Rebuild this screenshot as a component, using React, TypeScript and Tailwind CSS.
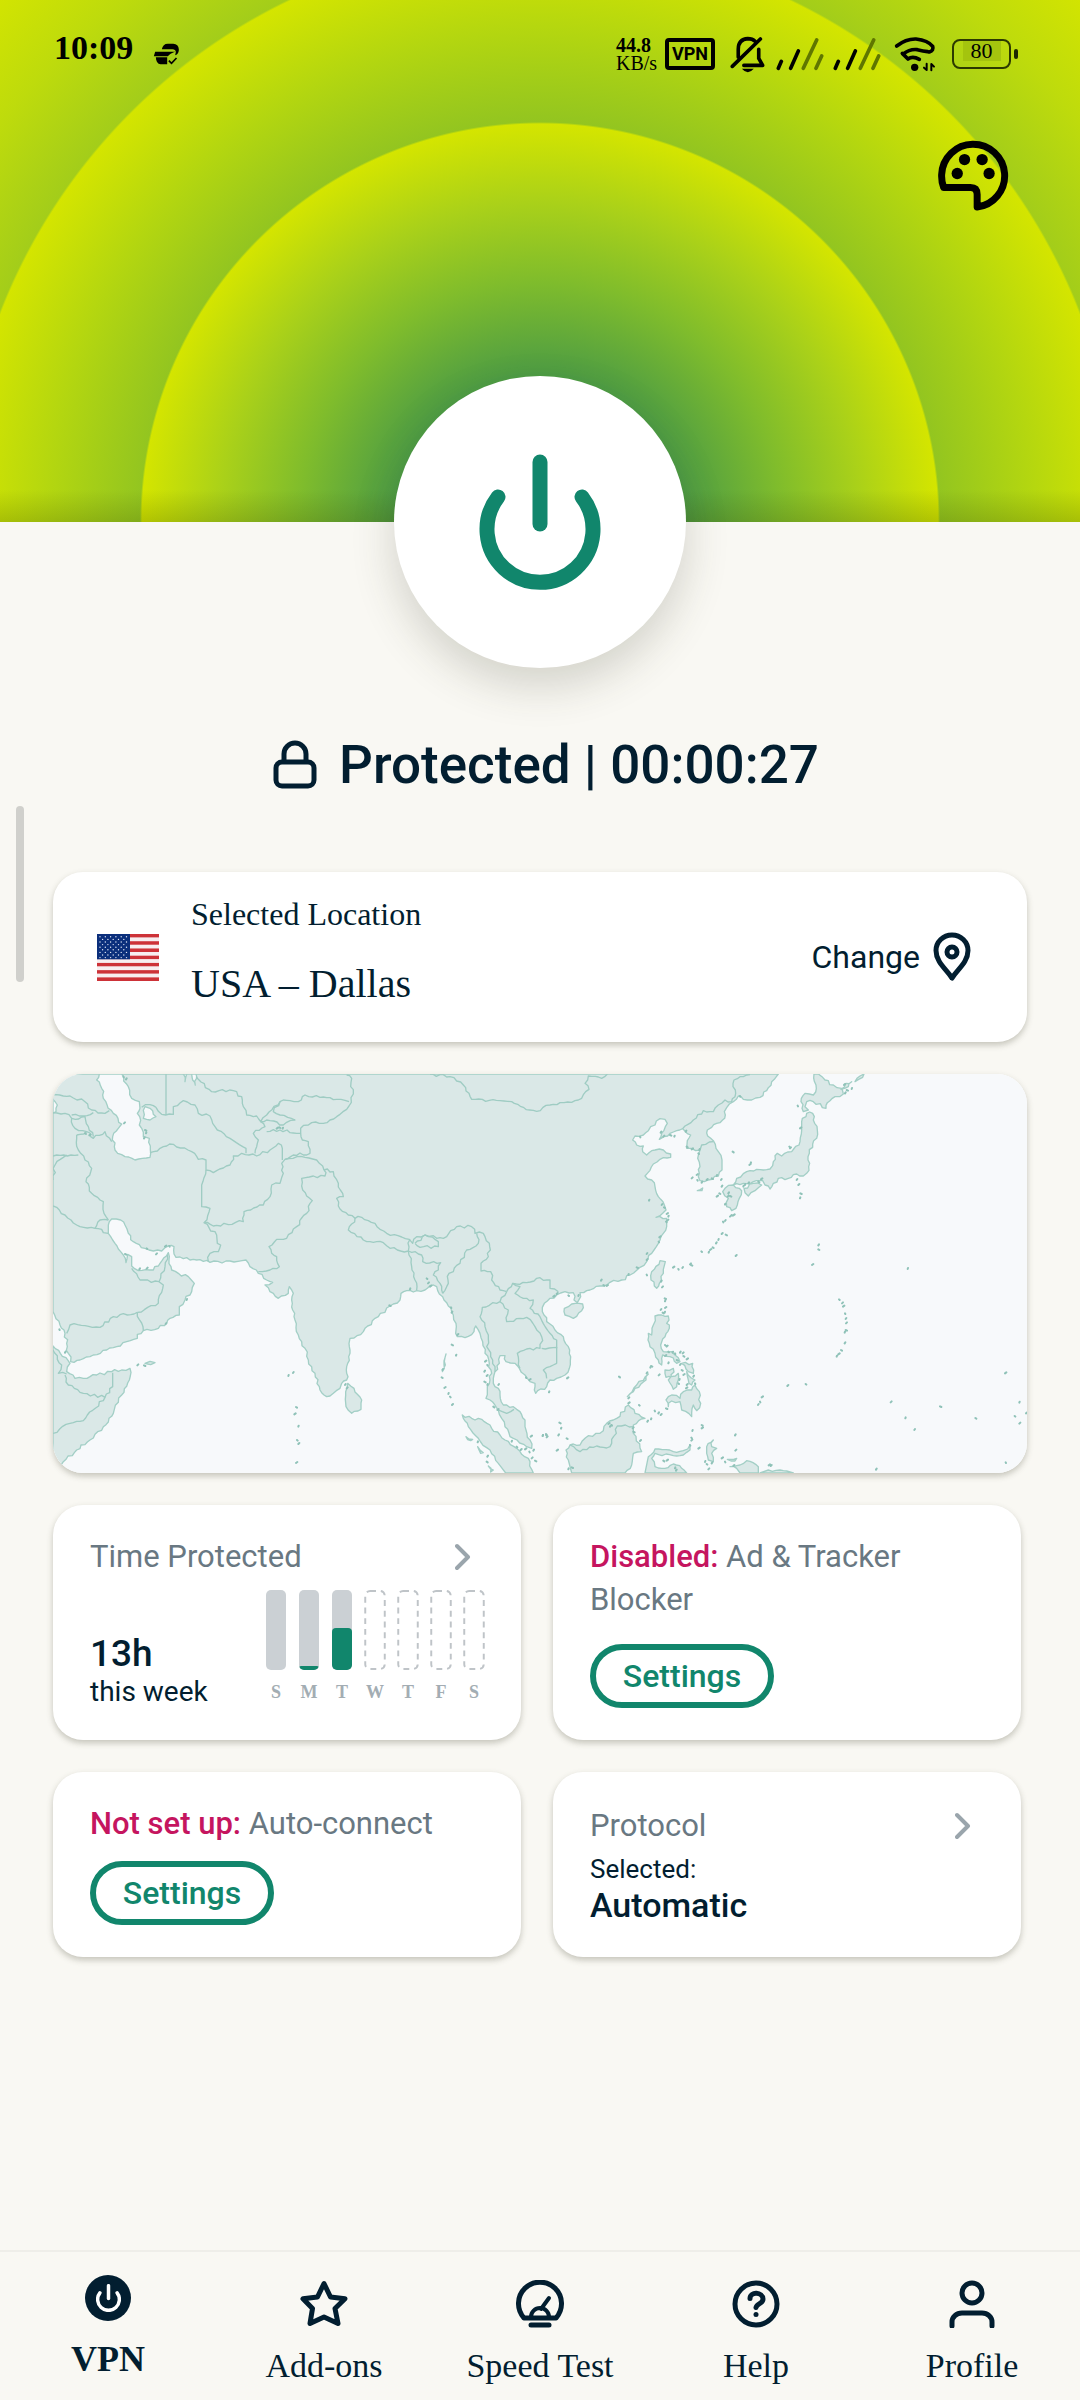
import type { ReactNode } from "react";

const SANS = "font-['Roboto',sans-serif]";
const SERIF = "font-['Liberation_Serif',serif]";

/* ---------- Map ---------- */

type Shape = [dx: number, points: string];

const LAND: Shape[] = [
  [0, "9,12 2185,12 2165,35 2150,62 2130,82 2105,90 2080,88 2065,78 2050,95 2038,102 2023,125 2024,145 2000,160 1985,172 1972,180 1973,198 1990,212 2005,245 2016,270 2016,300 2005,318 1975,330 1950,332 1945,320 1950,290 1943,265 1950,240 1925,235 1910,235 1912,212 1922,195 1905,183 1898,176 1880,182 1860,190 1842,200 1828,208 1835,190 1852,160 1845,148 1830,146 1815,165 1795,182 1780,195 1755,198 1748,210 1760,225 1780,228 1778,245 1790,255 1815,240 1840,240 1862,252 1862,262 1830,268 1810,282 1785,318 1805,330 1815,350 1825,380 1843,405 1848,420 1838,430 1818,442 1850,445 1850,470 1840,490 1825,520 1805,550 1790,575 1770,592 1740,615 1715,630 1680,637 1650,648 1620,660 1590,668 1592,680 1582,698 1572,690 1570,668 1545,665 1520,675 1500,685 1483,700 1477,725 1490,755 1515,780 1540,800 1555,830 1562,860 1558,895 1545,915 1520,925 1500,930 1490,950 1457,970 1455,940 1440,935 1425,915 1408,895 1395,880 1368,875 1365,857 1350,857 1348,880 1335,905 1330,925 1330,940 1345,955 1350,975 1360,1005 1390,1010 1410,1025 1425,1050 1428,1080 1440,1110 1445,1135 1430,1130 1380,1100 1365,1070 1355,1045 1345,1020 1320,990 1308,985 1312,950 1325,910 1318,880 1305,850 1298,815 1290,790 1277,768 1272,785 1245,803 1222,800 1218,760 1210,735 1195,708 1178,680 1160,650 1150,645 1125,660 1100,662 1070,662 1053,670 1050,690 1020,708 985,740 945,775 940,785 900,805 897,820 900,850 893,880 890,930 875,940 870,955 850,970 840,978 822,975 808,950 795,910 775,870 765,835 745,795 735,750 727,700 725,660 718,650 715,670 685,685 660,665 645,645 668,637 650,630 625,610 600,590 588,570 540,573 480,577 440,570 400,566 378,562 372,530 355,528 335,543 310,543 285,535 250,515 235,490 225,465 212,450 185,447 175,465 175,490 195,520 212,545 228,578 233,553 245,560 245,588 265,602 310,600 330,580 355,548 357,570 365,600 385,610 415,620 433,640 425,665 405,690 388,710 388,735 360,745 350,760 325,775 280,782 262,793 262,805 200,830 130,855 90,870 62,875 55,850 50,820 45,790 30,765 9,725"],
  [0, "9,828 60,880 50,905 75,925 100,925 140,915 185,905 215,900 240,895 238,930 215,975 190,1030 160,1070 120,1110 80,1140 40,1175 20,1200 9,1209"],
  [0, "893,940 912,955 935,990 933,1018 905,1030 888,1010 887,965"],
  [0, "1237,1035 1265,1045 1295,1048 1325,1075 1365,1110 1400,1135 1435,1165 1450,1209 1367,1209 1345,1180 1320,1140 1285,1105 1255,1070"],
  [1470, "73,715 95,702 128,702 125,722 100,745 75,735"],
  [1470, "360,572 376,575 370,610 358,640 350,655 333,630 335,605"],
  [1470, "800,130 818,130 820,150 832,180 830,205 818,222 808,250 806,290 800,310 790,318 770,312 745,325 715,325 700,340 690,357 675,345 668,332 640,335 610,340 580,345 590,325 620,305 650,298 690,297 700,275 712,250 725,258 755,245 780,215 785,180 785,155"],
  [1470, "612,355 640,340 665,345 645,362 625,378"],
  [1470, "555,355 580,345 605,362 598,385 588,415 575,422 560,410 565,385 548,365"],
  [1470, "822,12 835,12 855,30 880,45 905,55 910,72 885,80 862,98 858,115 820,95 800,95 795,110 805,120 790,125 783,95 795,70 820,75 828,45"],
  [1470, "903,58 918,40 935,35 925,50"],
  [1470, "945,35 960,18 972,12 968,22"],
  [1470, "345,738 385,738 380,760 388,775 375,800 362,825 370,845 395,845 405,855 420,875 410,880 390,860 368,855 365,885 355,870 345,850 330,830 325,790 335,795 340,765"],
  [1470, "375,900 400,895 395,925 378,922"],
  [1470, "385,930 415,910 410,950 400,958"],
  [1470, "425,880 458,880 460,910 445,905"],
  [1470, "440,905 465,930 455,945 445,930"],
  [1470, "378,990 395,975 420,985 430,965 455,960 465,945 478,965 482,1000 470,1022 460,1005 455,1040 425,1020 420,995 395,993 385,1010"],
  [1470, "262,980 290,945 325,912 318,930 280,965"],
  [1470, "265,1005 285,1030 315,1045 280,1065 280,1090 305,1145 280,1150 275,1185 255,1209 95,1209 85,1170 78,1140 90,1125 120,1125 135,1105 180,1090 200,1060 230,1045"],
  [1470, "325,1160 345,1137 400,1145 430,1142 450,1125 450,1140 430,1155 400,1157 345,1150 335,1165 345,1190 375,1195 400,1182 425,1195 440,1209 315,1209"],
  [1470, "500,1130 520,1110 515,1130 530,1135 515,1150 520,1175 505,1170 500,1150"],
  [1470, "570,1190 600,1185 620,1172 655,1190 655,1209 600,1209 590,1195"],
  [1470, "660,1209 685,1200 720,1200 760,1209"],
  [1470, "562,1168 590,1165 585,1173"],
  [1470, "472,362 488,354 486,362"],
  [0, "1177,905 1188,852 1186,885"],
  [0, "285,880 300,874 315,878 302,884"],
  [0, "1248,1100 1268,1108 1262,1112"],
  [0, "1283,1130 1300,1148 1292,1150"],
  [0, "1315,1188 1330,1200 1322,1206"],
];

const LAKES: Shape[] = [
  [0, "148,12 215,12 235,50 245,85 268,95 270,115 262,130 275,175 280,200 298,205 300,262 255,270 225,260 195,240 188,200 205,175 215,162 190,130 160,85 155,55 140,30"],
  [0, "285,110 300,115 318,140 300,150 280,145"],
  [0, "400,12 410,12 405,35"],
  [0, "425,12 438,12 436,45 428,30"],
  [0, "9,88 22,105 18,125 9,130"],
];

const BORDERS: string[] = [
  "1140,12 1200,20 1240,45 1265,88 1350,92 1385,95 1420,112 1460,124 1500,105 1530,98 1565,97 1595,85 1617,58 1605,40 1615,18 1655,25 1672,12",
  "890,15 905,25 902,50 910,72 897,108 860,140 820,160 785,158 752,175 752,190",
  "897,95 860,88 810,82 765,75 745,95 720,92 690,95 670,125 690,135 735,150 700,165 650,150 632,155",
  "650,185 690,180 740,190 752,190 757,210 775,215 780,250 730,255 705,268",
  "348,12 348,135",
  "318,112 335,133 370,133 370,110 400,92 435,105 445,130 480,138 495,170 540,205 588,235 588,250",
  "275,112 300,104 318,112",
  "438,20 485,65 550,62 575,80 580,110 590,135 620,138 632,155 650,135 690,95",
  "632,155 645,170 610,190 625,210 615,250",
  "300,248 340,230 370,223 425,245 445,268 468,270 468,300 490,308 540,285 550,258 575,250 620,258 660,240 685,220 697,235 697,270",
  "468,300 455,345 455,410 480,415 462,458 500,495 502,520 512,525 505,545 480,550 475,575",
  "462,458 500,466 580,455 582,425 640,405 660,380 665,345 690,340 700,310 695,280 705,268 765,262 800,270 822,300",
  "822,300 825,318 755,325 758,360 787,392 770,430 740,470 710,505 680,508 657,530 665,550 680,560 688,590 660,600 625,605",
  "822,300 850,305 865,340 880,380 860,385 865,408 895,435 915,445 935,442 975,460 1010,490 1078,508 1088,520 1100,500 1125,495 1160,505 1180,505 1220,470 1265,470 1275,490 1300,490 1318,520 1315,560 1293,580 1293,603 1322,605 1325,630 1350,660 1370,665",
  "915,445 895,480 950,515 1000,518 1020,535 1075,543 1080,508",
  "1095,520 1125,495 1165,515 1165,530 1110,532 1095,520",
  "1075,543 1115,555 1118,575 1172,578 1165,600 1150,615 1170,640 1178,670",
  "1075,543 1085,590 1095,630 1100,660",
  "1280,490 1285,520 1250,540 1230,580 1210,605 1197,610 1190,650 1178,670",
  "1370,665 1350,695 1297,712 1290,740 1305,770 1315,795 1310,830 1335,890 1335,905",
  "1370,665 1388,640 1410,650 1395,670 1420,685 1450,690 1440,715 1470,740 1500,790 1520,810 1520,835",
  "1350,695 1375,720 1370,755 1430,742 1455,770 1475,800 1470,835 1430,837 1402,850 1410,895",
  "1388,640 1430,638 1460,625 1500,630 1500,655 1525,665",
  "1475,835 1520,832 1520,880 1480,900 1490,925",
  "1898,176 1930,150 1960,122 1990,125 2025,90 2045,95 2055,80 2052,30 2070,20 2100,14",
  "1950,240 1955,225 1990,215",
  "9,408 90,470 135,475 150,450 175,450",
  "135,475 155,478 160,488 175,490",
  "80,195 85,240 105,270 125,295 108,335 125,370 160,395 162,430 175,450",
  "9,75 60,78 105,95 125,120 165,130 178,122",
  "9,128 45,130 65,145 75,175 110,185 130,205 165,185 185,215",
  "65,145 105,140 115,170 130,200",
  "65,135 100,138 130,128",
  "80,195 110,185",
  "9,258 85,255",
  "9,330 15,285 50,255",
  "262,727 325,700 340,645 327,635 270,630 245,595",
  "262,727 280,782",
  "327,635 345,590 352,555",
  "50,790 60,765 150,772 190,740 262,727",
  "9,840 35,885 25,910 50,912",
  "45,915 55,945 100,970 165,982 188,950 188,908",
  "165,982 100,1052 60,1060 9,1090",
  "1345,1020 1370,1030 1392,1018",
  "1560,1125 1590,1145 1630,1132 1680,1130 1702,1068 1750,1070",
];

const ISLETS: Shape[] = [
  [0, "28,778 45,848 262,886 282,886 715,918 729,909 738,1011 733,1033 745,1070 741,1110 745,1122 738,1179 220,20 228,28 222,160 285,180 288,190 282,205 688,172 680,176 698,176 290,535 318,553 345,530 358,528 268,598 290,596 225,552 410,690 347,762 105,190 118,196 1080,658 1130,625 1134,640 1140,650 1203,712 1205,728 1222,795 1205,824 1218,857 1177,900 1175,922 1183,954 1195,972 1200,980 1206,1005 1305,875 1312,885 1303,905 1310,918 1303,935 1312,945 1345,945 1330,1010 1342,1020 1385,1115 1400,1130 1412,1140 1425,1138 1438,1145 1450,1142 1445,1165 1455,1172 1283,1117 1312,1160 1310,1175 1442,1100 1478,1098 1488,1092 1490,1102 1438,930 1428,922 885,945 890,955 1018,706"],
  [1470, "300,200 362,188 370,200 390,195 403,200 437,185 440,230 455,238 478,240 475,250 455,325 470,315 472,330 485,338 500,330 515,325 530,318 543,330 578,245 628,285 632,280 748,230 750,235 780,175 773,107 770,330 775,345 781,370 780,385 545,350 538,370 530,380 555,404 575,435 570,440 580,436 549,455 555,453 545,492 557,494 535,510 528,520 518,532 510,540 506,548 484,544 587,558 399,593 415,597 427,594 450,583 453,585 327,392 365,405 372,412 380,432 385,440 378,455 382,452 358,502 356,515 320,552 320,570 290,592 265,615 183,632 190,645 200,648 115,678 85,676 50,672 40,680 320,614 363,635 366,652 374,685 375,694 362,720 368,728 375,714 374,728 375,825 380,830 375,858 405,850 420,848 428,850 410,870 385,880 420,885 425,900 430,915 418,930 415,940 440,945 438,955 465,940 460,920 356,916 333,888 331,893 320,910 237,920 81,925 27,967 297,1005 265,985 265,1000 344,1022 355,1030 362,1035 378,1015 333,1048 322,1055 485,1065 485,1075 457,1083 454,1103 454,1112 475,1136 450,1125 585,1096 586,1142 58,1058 63,1076 55,1096 80,1105 50,1142 8,1098 18,1095 300,1113 205,1062 215,1065 210,1070 278,1075 280,1085 405,1195 408,1202 370,1172 380,1172 495,1176 500,1182 505,1198 545,1165 555,1175 515,1180 580,1188 95,1192 85,1198 835,526 835,538 816,585 1103,597 897,688 906,700 909,710 915,730 917,747 918,760 917,780 914,788 914,820 903,840 895,853 890,860 797,942 742,948 665,982 660,995 654,1005 1052,997 1200,1009 1096,1045 1123,1080 1306,1044 1395,910 1438,998 1424,1038 1438,1061 1458,1030 1397,1177 1008,1199 912,45 920,60 935,57 915,70 430,858 440,868 398,848 385,845 692,1188 686,1186 600,78 565,370 563,380 570,378 615,345 625,340 655,335 663,328 610,350"],
];

function parse([dx, pts]: Shape) {
  return pts.split(" ").map((p) => {
    const [x, y] = p.split(",").map(Number);
    return [x + dx, y];
  });
}

/* Breaks long segments into short ones with a slight, repeatable wobble. */
function roughPath(shape: Shape, close: boolean) {
  const pts = parse(shape);
  if (close) pts.push(pts[0]);
  const out: string[] = [`M${pts[0][0]} ${pts[0][1]}`];
  for (let i = 1; i < pts.length; i++) {
    const [ax, ay] = pts[i - 1];
    const [bx, by] = pts[i];
    const len = Math.hypot(bx - ax, by - ay);
    const straight = ax === bx || (ay === 12 && by === 12) || ay === 1209;
    const n = straight ? 1 : Math.max(1, Math.round(len / 11));
    for (let k = 1; k <= n; k++) {
      const t = k / n;
      const seed = Math.sin((ax + k * 17) * 12.9 + (ay - k * 5) * 78.2) * 43758.5;
      const w = k === n ? 0 : (seed - Math.floor(seed) - 0.5) * 9;
      const nx = len ? -(by - ay) / len : 0;
      const ny = len ? (bx - ax) / len : 0;
      out.push(`L${Math.round(ax + (bx - ax) * t + nx * w)} ${Math.round(ay + (by - ay) * t + ny * w)}`);
    }
  }
  return out.join("") + (close ? "Z" : "");
}

function WorldMap() {
  return (
    <svg viewBox="9 12 2922 1197" className="block w-full" role="img" aria-label="Map of Asia">
      <rect x="9" y="12" width="2922" height="1197" fill="#f7f9fb" />
      <g fill="#dae8e7" stroke="#a3cfc6" strokeWidth="4" strokeLinejoin="round">
        {LAND.map((s, i) => <path key={i} d={roughPath(s, true)} />)}
      </g>
      <g fill="#f7f9fb" stroke="#a3cfc6" strokeWidth="4" strokeLinejoin="round">
        {LAKES.map((s, i) => <path key={i} d={roughPath(s, true)} />)}
      </g>
      <g fill="none" stroke="#9fccc3" strokeWidth="4" strokeLinejoin="round">
        {BORDERS.map((s, i) => <path key={i} d={roughPath([0, s], false)} />)}
      </g>
      <g fill="none" stroke="#8fc2b8" strokeWidth="6" strokeLinecap="round">
        {ISLETS.map((s, i) => (
          <path key={i} d={parse(s).map(([x, y], k) => `M${x} ${y}l${(k % 4) + 1} ${k % 3 ? -3 : 2}`).join("")} />
        ))}
      </g>
    </svg>
  );
}

/* ---------- Icons ---------- */

function StatusIcons() {
  return (
    <div className="flex items-center text-black">
      <div className={`${SERIF} flex w-[39px] flex-col text-[20px] leading-[18px]`}>
        <span className="font-bold">44.8</span>
        <span>KB/s</span>
      </div>
      <span className={`${SANS} ml-[10px] flex h-8 w-[50px] items-center justify-center rounded-[4px] border-4 border-black text-[18px] leading-none font-bold`}>
        VPN
      </span>
      <svg viewBox="450 108 106 112" className="ml-[15px] h-[37px] w-[35px]" fill="none" stroke="#000" strokeWidth="11" strokeLinecap="round" strokeLinejoin="round">
        <path d="M457 200L542 117" />
        <path d="M475 172V148q0-30 29-32q14 0 22 8" />
        <path d="M492 197H549L537 176V148" />
        <path d="M486 207H522Q504 228 486 207Z" fill="#000" stroke="none" />
      </svg>
      {[0, 1].map((n) => (
        <svg key={n} viewBox="590 110 144 102" className={n ? "ml-[9px] h-[34px] w-12" : "ml-[11px] h-[34px] w-12"} fill="none" stroke="#000" strokeWidth="11" strokeLinecap="round">
          <path d="M597 204L606 183M634 204L657 152" />
          <path d="M672 204L712 119M710 204L727 167" stroke="#5f7600" />
        </svg>
      ))}
      <svg viewBox="942 108 126 108" className="ml-[13px] h-9 w-[42px]" fill="none" stroke="#000" strokeWidth="11" strokeLinecap="round" strokeLinejoin="round">
        <path d="M950 138Q978 116 1008 117Q1044 121 1058 139Q1062 152 1048 156" />
        <path d="M970 162Q990 146 1012 149Q1030 153 1043 155" />
        <path d="M967 160L984 177Q998 167 1018 178" />
        <circle cx="1004" cy="202" r="11" fill="#000" stroke="none" />
        <path d="M1040 191V210M1040 210L1032 203M1054 211V192M1054 192L1062 200" strokeWidth="6" />
      </svg>
      <div className="ml-4 flex items-center gap-[3px]">
        <div className={`${SERIF} flex h-[30px] w-[59px] items-start justify-center rounded-[8px] border-2 border-[#2c3900] text-[22px] leading-5`}>
          <span className="bg-[#a4c40e] px-2">80</span>
        </div>
        <span className="h-[10px] w-1 rounded-sm bg-[#1e2800]" />
      </div>
    </div>
  );
}

function DebugIcon() {
  return (
    <svg viewBox="448 127 80 66" className="h-[22px] w-[27px]" fill="#000">
      <path d="M474 146Q477 129 492 129H508Q524 130 525 146Q526 160 514 164L516 154Q515 146 506 146Z" />
      <path d="M454 153H514Q498 158 492 167H450Z" />
      <path d="M456 170H490V191H470Q457 190 456 170Z" />
      <path d="M495 180L503 188L518 172" fill="none" stroke="#000" strokeWidth="5" />
    </svg>
  );
}

function PaletteIcon() {
  return (
    <svg viewBox="1074 420 214 214" className="size-[71px]">
      <path d="M1091 563Q1084 545 1085 524A95 95 0 1 1 1192 622V584Q1192 563 1172 563Z" fill="none" stroke="#000" strokeWidth="21" strokeLinejoin="round" />
      <circle cx="1132" cy="521" r="17" />
      <circle cx="1154" cy="479" r="17" />
      <circle cx="1207" cy="479" r="17" />
      <circle cx="1228" cy="521" r="17" />
    </svg>
  );
}

function PowerGlyph({ className, width }: { className: string; width: number }) {
  return (
    <svg viewBox="0 0 122 136" className={className} fill="none" stroke="currentColor" strokeWidth={width} strokeLinecap="round">
      <path d="M61 8V70" />
      <path d="M19 43A53 53 0 1 0 103 43" />
    </svg>
  );
}

function LockIcon() {
  return (
    <svg viewBox="0 0 44 50" className="h-[50px] w-11" fill="none" stroke="currentColor" strokeWidth="5">
      <rect x="3" y="22" width="38" height="24" rx="6" />
      <path d="M11 22V14a11 11 0 0 1 22 0V22" />
    </svg>
  );
}

function Pin() {
  return (
    <svg viewBox="0 0 40 50" className="h-[50px] w-10" fill="none" stroke="currentColor" strokeWidth="5" strokeLinejoin="round">
      <path d="M20 46C14 37 4 30 4 18.500A16 15.500 0 0 1 36 18.500C36 30 26 37 20 46Z" />
      <circle cx="20" cy="20" r="5" />
    </svg>
  );
}

function Flag() {
  const stripes = Array.from({ length: 13 }, (_, i) => i);
  const stars = Array.from({ length: 9 }, (_, r) =>
    Array.from({ length: r % 2 ? 5 : 6 }, (_, c) => `M${(r % 2 ? 5.600 : 3) + c * 5.300} ${2.800 + r * 2.600}h0.010`).join(""),
  ).join("");
  return (
    <svg viewBox="0 0 62 47" className="h-[47px] w-[62px]" role="img" aria-label="USA">
      <rect width="62" height="47" fill="#f7eef0" />
      {stripes.map((i) => (
        <rect key={i} y={i * 3.615} width="62" height="3.615" fill={i % 2 ? "#f7eef0" : "#cd3238"} />
      ))}
      <rect width="33" height="25.300" fill="#0b2f7c" />
      <path d={stars} stroke="#dfe6f5" strokeWidth="1.400" strokeLinecap="round" />
    </svg>
  );
}

function Chevron() {
  return (
    <svg viewBox="0 0 16 28" className="h-7 w-4 shrink-0" fill="none" stroke="#9aa5ac" strokeWidth="4" strokeLinecap="round" strokeLinejoin="round">
      <path d="M2 3L13 14L2 25" />
    </svg>
  );
}

function NavSvg({ children }: { children: ReactNode }) {
  return (
    <svg viewBox="0 0 48 48" className="size-12" fill="none" stroke="currentColor" strokeWidth="5" strokeLinecap="round" strokeLinejoin="round">
      {children}
    </svg>
  );
}

/* ---------- Parts ---------- */

const CARD = "rounded-[30px] bg-white shadow-[0_3px_6px_rgba(60,60,40,0.28)]";

function SettingsButton() {
  return (
    <button className="h-16 w-[184px] rounded-full border-[6px] border-[#11866c] text-[32px] leading-none font-medium text-[#11866c]">
      Settings
    </button>
  );
}

const DAYS = [
  { label: "S", past: true, fill: 0 },
  { label: "M", past: true, fill: 5 },
  { label: "T", past: true, fill: 52 },
  { label: "W", past: false, fill: 0 },
  { label: "T", past: false, fill: 0 },
  { label: "F", past: false, fill: 0 },
  { label: "S", past: false, fill: 0 },
];

function WeekChart() {
  return (
    <div className="flex gap-[13px]">
      {DAYS.map((d, i) => (
        <div key={i} className="flex w-5 flex-col items-center gap-3">
          {d.past ? (
            <div className="flex h-20 w-5 items-end overflow-hidden rounded-[5px] bg-[#cbd0d4]">
              <div className="w-full rounded-[4px] bg-[#11866c]" style={{ height: `${d.fill}%` }} />
            </div>
          ) : (
            <svg viewBox="0 0 22 82" className="h-20 w-[22px]" fill="none" stroke="#bfc4c8" strokeWidth="2" strokeDasharray="6 5">
              <rect x="1" y="1" width="20" height="80" rx="5" />
            </svg>
          )}
          <span className={`${SERIF} text-[18px] leading-5 font-bold text-[#a3adb3]`}>{d.label}</span>
        </div>
      ))}
    </div>
  );
}

const NAV = [
  {
    label: "Add-ons",
    icon: <path d="M24 3.500L30.500 17L45 18.800L35 28.500L38 43.500L24 37L10 43.500L12.500 28.500L3 18.800L17.500 17Z" />,
  },
  {
    label: "Speed Test",
    icon: (
      <>
        <path d="M8 38A21.500 21.500 0 1 1 40 38Z" />
        <path d="M15 45H33" />
        <path d="M15 37A9 9 0 0 1 33 37M25 29L33 18" strokeWidth="4" />
      </>
    ),
  },
  {
    label: "Help",
    icon: (
      <>
        <circle cx="24" cy="24" r="21" />
        <path d="M18 18.500C18 11 31 12 31 19C31 24 25 23 24 27.500" />
        <path d="M24 34.500h0.010" />
      </>
    ),
  },
  {
    label: "Profile",
    icon: (
      <>
        <circle cx="24" cy="13" r="10" />
        <path d="M4 46V42A10 9 0 0 1 14 33H34A10 9 0 0 1 44 42V46" />
      </>
    ),
  },
];

export default function App() {
  return (
    <div className={`${SANS} relative flex min-h-screen flex-col bg-[#f9f8f3] text-[#021e30]`}>
      <header className="h-[522px] bg-[linear-gradient(to_top,rgba(60,80,0,0.22),rgba(60,80,0,0)_32px),radial-gradient(circle_at_50%_100%,#11866c_0px,#4d9c44_146px,#7fbc2c_240px,#aad119_320px,#d4e500_398px,#93c520_400px,#b3d610_490px,#d4e500_578px,#a3cd1a_580px,#bedb0c_670px,#d4e500_760px)]">
        <div className="flex h-[108px] items-center justify-between pr-[62px] pl-[54px]">
          <div className="flex items-center gap-5 text-black">
            <time className={`${SERIF} -mt-3 text-[34px] leading-9 font-bold`}>10:09</time>
            <DebugIcon />
          </div>
          <StatusIcons />
        </div>
        <div className="mt-8 flex justify-end pr-[71px]">
          <button aria-label="Theme">
            <PaletteIcon />
          </button>
        </div>
      </header>

      <main className="flex flex-col pr-[53px] pl-[53px]">
        <button
          aria-label="Disconnect"
          className="-mt-[146px] flex size-[292px] items-center justify-center self-center rounded-full bg-white text-[#11866c] shadow-[0_18px_44px_rgba(60,60,40,0.2)]"
        >
          <PowerGlyph className="h-[136px] w-[122px]" width={15} />
        </button>

        <h1 className="mt-[62px] flex items-center justify-center gap-[22px] pl-3 text-[53px] leading-[70px] font-medium">
          <LockIcon />
          <span>Protected | 00:00:27</span>
        </h1>

        <section className={`${CARD} mt-[72px] flex h-[170px] items-center pr-[55px] pl-11`}>
          <Flag />
          <div className={`${SERIF} ml-8 flex flex-1 flex-col gap-[30px] pb-4`}>
            <p className="text-[32px] leading-10">Selected Location</p>
            <p className="text-[40px] leading-10">USA – Dallas</p>
          </div>
          <button className="flex items-center gap-3 text-[32px] leading-10">
            Change
            <Pin />
          </button>
        </section>

        <section className={`${CARD} mt-8 overflow-hidden`}>
          <WorldMap />
        </section>

        <div className="mt-8 mr-[6px] grid grid-cols-2 gap-8 text-[31px] leading-[43px] text-[#697882]">
          <section className={`${CARD} h-[235px] pt-[30px] pr-[30px] pl-[37px]`}>
            <div className="flex items-center justify-between pr-5">
              <h2>Time Protected</h2>
              <Chevron />
            </div>
            <div className="mt-3 flex justify-between pr-[7px]">
              <div className="pt-[44px] text-[#021e30]">
                <p className="text-[37px] leading-10 font-medium">13h</p>
                <p className="text-[28px] leading-9">this week</p>
              </div>
              <WeekChart />
            </div>
          </section>

          <section className={`${CARD} h-[235px] pt-[30px] pr-[30px] pl-[37px]`}>
            <h2>
              <span className="font-medium text-[#c5155f]">Disabled:</span> Ad &amp; Tracker Blocker
            </h2>
            <div className="mt-[23px] flex">
              <SettingsButton />
            </div>
          </section>

          <section className={`${CARD} h-[185px] pt-[30px] pl-[37px]`}>
            <h2>
              <span className="font-medium text-[#c5155f]">Not set up:</span> Auto-connect
            </h2>
            <div className="mt-4 flex">
              <SettingsButton />
            </div>
          </section>

          <section className={`${CARD} h-[185px] pt-8 pr-[50px] pl-[37px]`}>
            <div className="flex items-center justify-between">
              <h2>Protocol</h2>
              <Chevron />
            </div>
            <p className="mt-1 text-[26px] leading-9 text-[#021e30]">Selected:</p>
            <p className="text-[34px] leading-9 font-medium text-[#021e30]">Automatic</p>
          </section>
        </div>
      </main>

      <nav className={`${SERIF} mt-auto grid h-[150px] grid-cols-5 border-t-2 border-[#efeee9] text-[34px] leading-10`}>
        <a href="#vpn" className="flex flex-col items-center gap-[18px] pt-[23px] text-[36px] font-bold">
          <span className="flex size-[46px] items-center justify-center rounded-full bg-[#021e30] text-white">
            <PowerGlyph className="h-7 w-[25px]" width={17} />
          </span>
          VPN
        </a>
        {NAV.map((n) => (
          <a key={n.label} href={`#${n.label.toLowerCase().replace(" ", "-")}`} className="flex flex-col items-center gap-[18px] pt-7">
            <NavSvg>{n.icon}</NavSvg>
            {n.label}
          </a>
        ))}
      </nav>

      <div className="absolute top-[806px] left-4 h-[176px] w-2 rounded-full bg-[#d0d0cc]" />
    </div>
  );
}
